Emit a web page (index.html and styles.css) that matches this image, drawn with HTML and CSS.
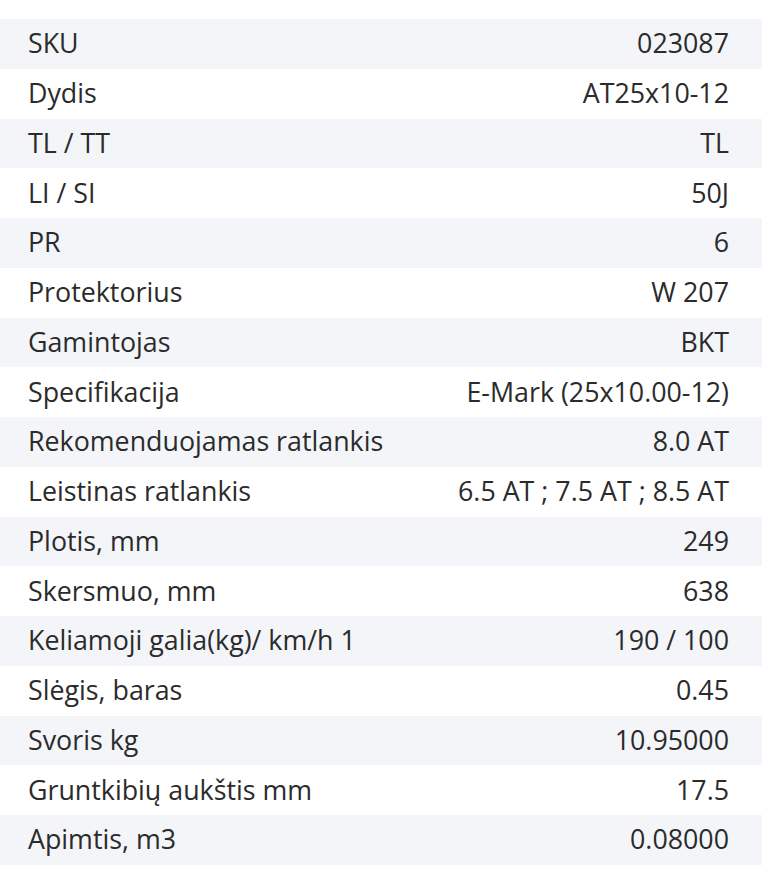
FILE: index.html
```html
<!DOCTYPE html>
<html lang="lt">
<head>
<meta charset="utf-8">
<link rel="stylesheet" href="styles.css">
</head>
<body>
<table class="specs">
<tbody>
<tr><td>SKU</td><td>023087</td></tr>
<tr><td>Dydis</td><td>AT25x10-12</td></tr>
<tr><td>TL / TT</td><td>TL</td></tr>
<tr><td>LI / SI</td><td>50J</td></tr>
<tr><td>PR</td><td>6</td></tr>
<tr><td>Protektorius</td><td>W 207</td></tr>
<tr><td>Gamintojas</td><td>BKT</td></tr>
<tr><td>Specifikacija</td><td>E-Mark (25x10.00-12)</td></tr>
<tr><td>Rekomenduojamas ratlankis</td><td>8.0 AT</td></tr>
<tr><td>Leistinas ratlankis</td><td>6.5 AT ; 7.5 AT ; 8.5 AT</td></tr>
<tr><td>Plotis, mm</td><td>249</td></tr>
<tr><td>Skersmuo, mm</td><td>638</td></tr>
<tr><td>Keliamoji galia(kg)/ km/h 1</td><td>190 / 100</td></tr>
<tr><td>Slėgis, baras</td><td>0.45</td></tr>
<tr><td>Svoris kg</td><td>10.95000</td></tr>
<tr><td>Gruntkibių aukštis mm</td><td>17.5</td></tr>
<tr><td>Apimtis, m3</td><td>0.08000</td></tr>
</tbody>
</table>
</body>
</html>
```
FILE: styles.css
```css
html, body {
  margin: 0;
  padding: 0;
  background: #ffffff;
}
body {
  padding-top: 19px;
  font-family: "Open Sans", "DejaVu Sans", sans-serif;
  color: #2b2b2b;
}
.specs {
  width: 762px;
  border-collapse: collapse;
  border-spacing: 0;
  font-size: 26.8px;
}
.specs td {
  height: 49.76px;
  padding: 0 0 0 28px;
  line-height: 1;
  vertical-align: middle;
  white-space: nowrap;
  box-sizing: border-box;
}
.specs td + td {
  text-align: right;
  padding: 0 33px 0 0;
}
.specs tr:nth-child(odd) td {
  background: #f3f5f9;
}
```
